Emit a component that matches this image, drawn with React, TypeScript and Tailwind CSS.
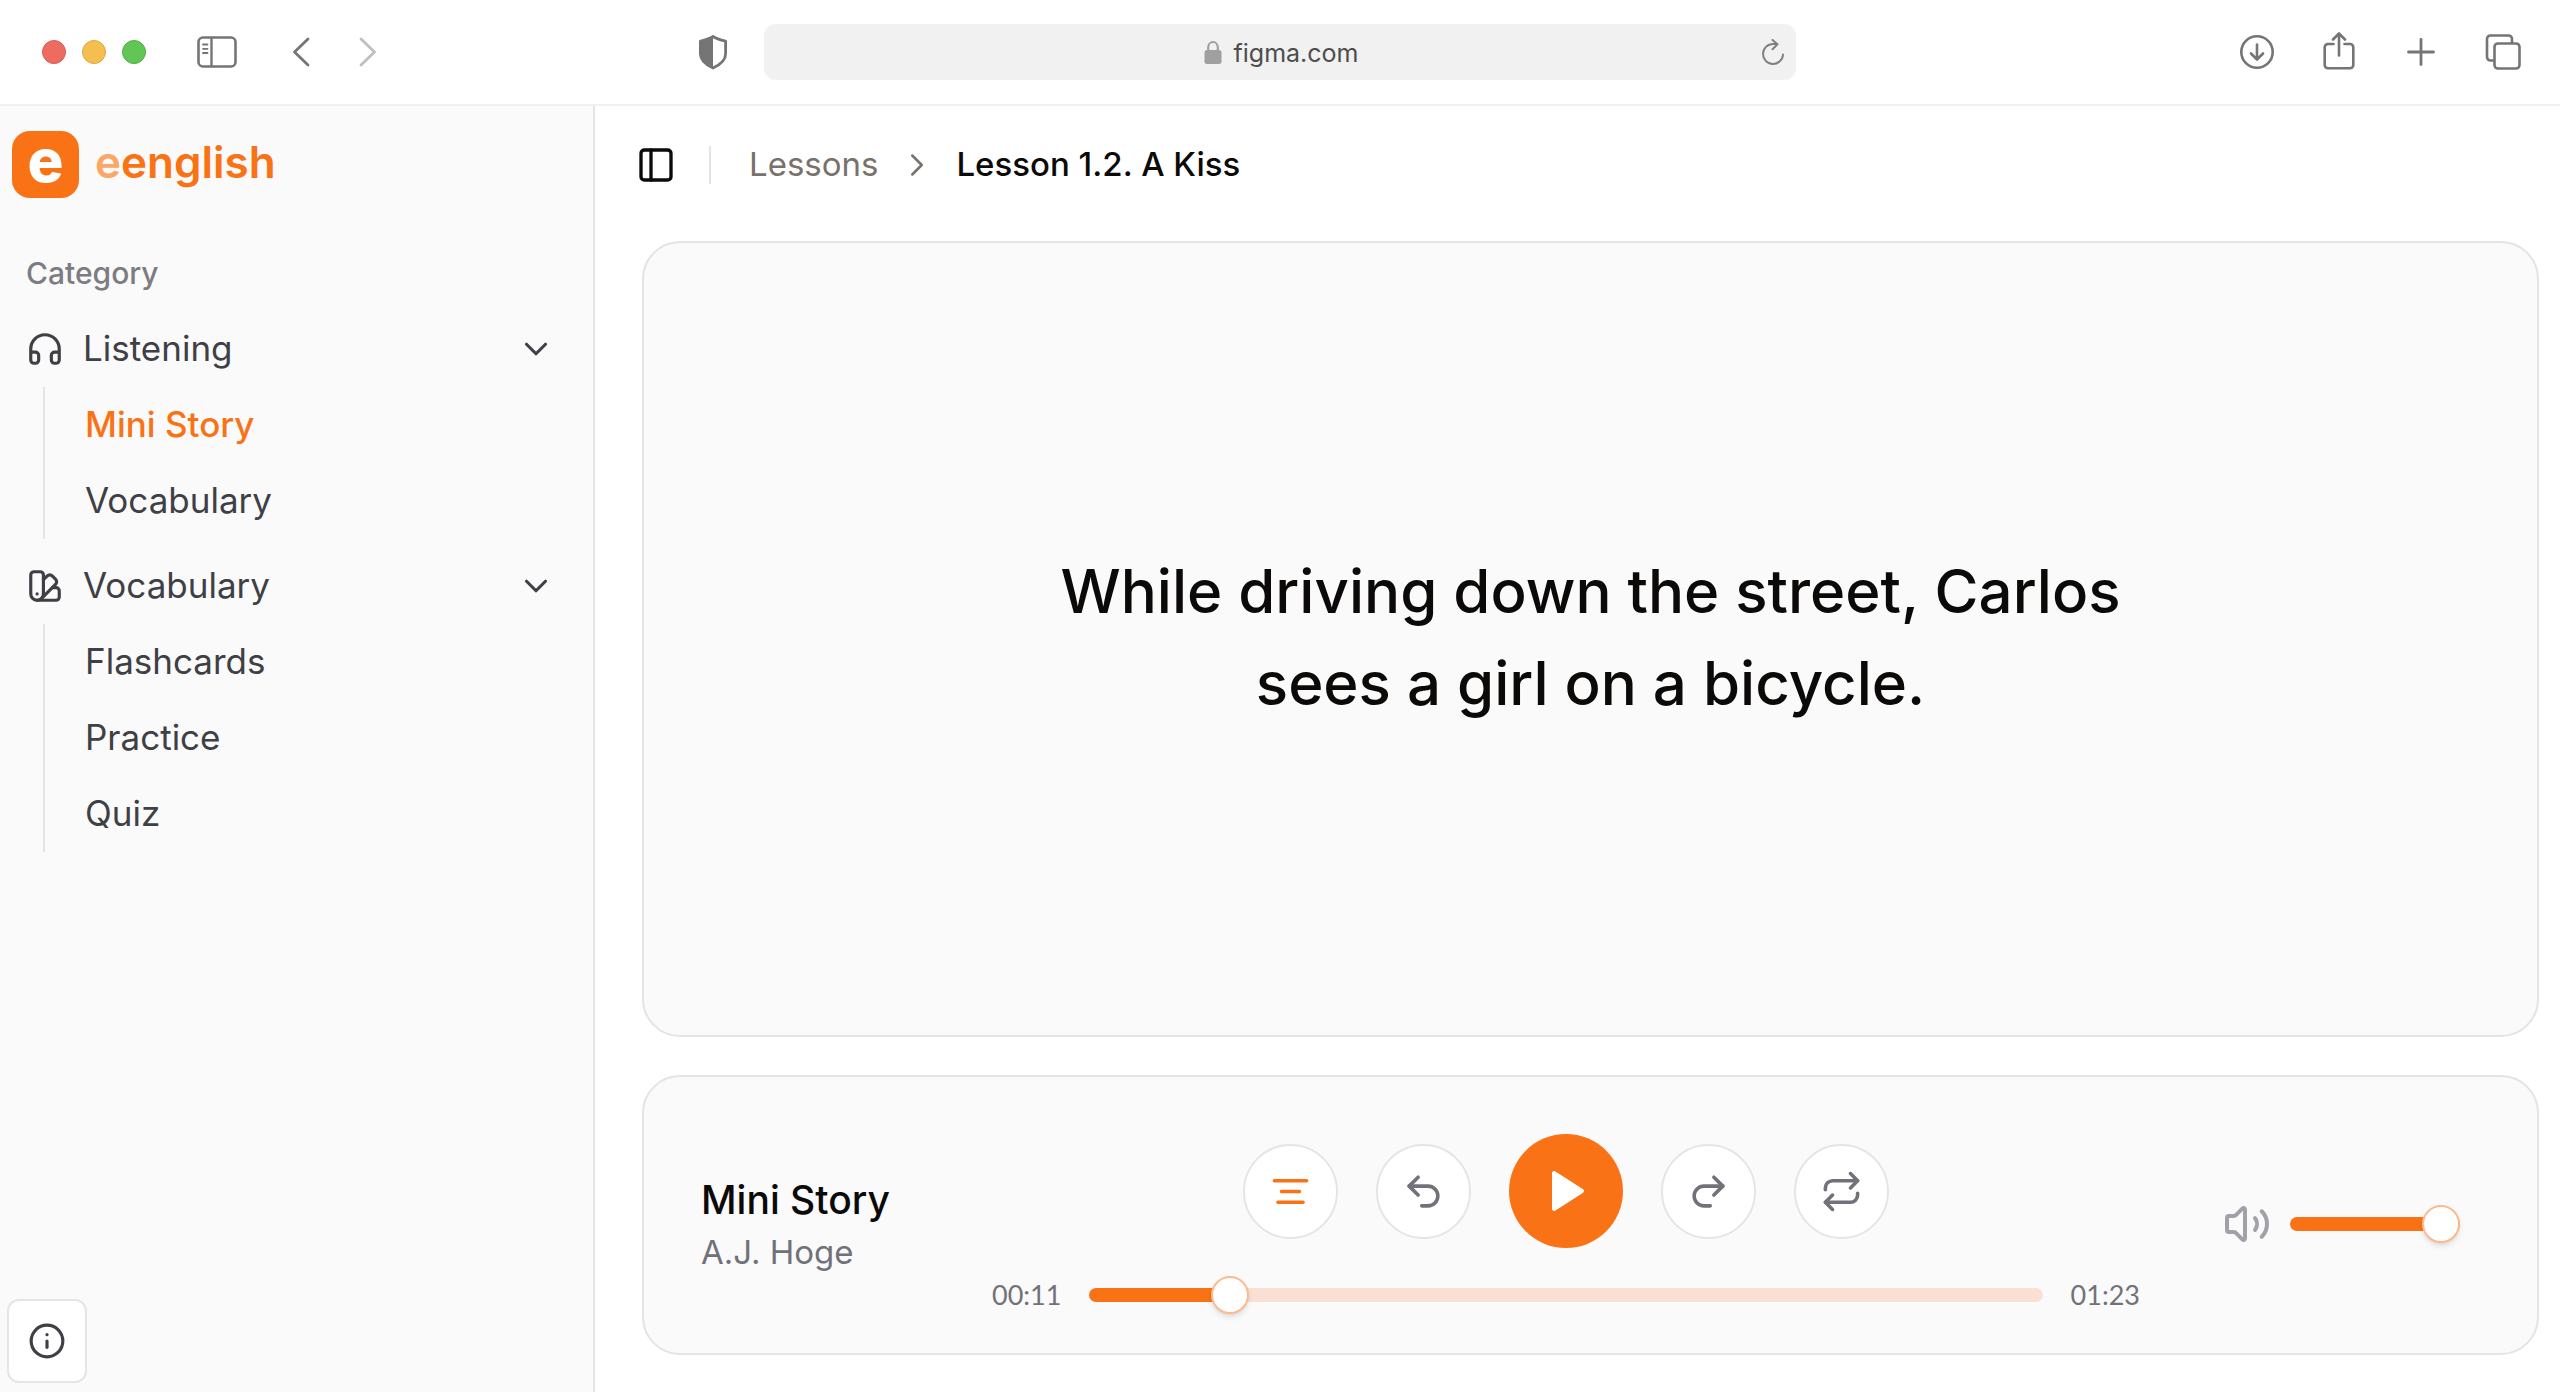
import { useState } from "react";
import {
  ChevronDown,
  ChevronRight,
  Headphones,
  Info,
  PanelLeft,
  Redo2,
  Repeat,
  SwatchBook,
  Undo2,
  Volume2,
  type LucideIcon,
} from "lucide-react";

const TRACK_EMPTY = "#fae0d2";
const TRACK_FILL = "#f97316";

function BrowserBar() {
  return (
    <header className="grid h-[106px] shrink-0 grid-cols-[764fr_1032fr_764fr] items-center border-b-2 border-[#f0f0f0] bg-white text-[#757575]">
      <div className="flex items-center pl-[42px] pr-9">
        <div className="flex gap-4">
          <span className="size-6 rounded-full border border-[#d95b50] bg-[#ed6b60]" />
          <span className="size-6 rounded-full border border-[#dba744] bg-[#f5bf4f]" />
          <span className="size-6 rounded-full border border-[#52ab45] bg-[#62c655]" />
        </div>
        <button type="button" aria-label="Show sidebar" className="ml-[50px]">
          <svg width="42" height="34" viewBox="0 0 42 34" fill="none" stroke="currentColor" strokeWidth="2.6">
            <rect x="2.5" y="2.5" width="37" height="29" rx="4.5" />
            <path d="M15.500 2.500v29" strokeWidth="2.400" />
            <path d="M7 9.500h4.500M7 13.800h4.500M7 18h4.500" strokeWidth="1.800" strokeLinecap="round" />
          </svg>
        </button>
        <button type="button" aria-label="Back" className="ml-[52px]">
          <svg width="20" height="32" viewBox="0 0 20 32" fill="none" stroke="currentColor" strokeWidth="2.800" strokeLinecap="round" strokeLinejoin="round">
            <path d="M18 3 4.500 16 18 29" />
          </svg>
        </button>
        <button type="button" aria-label="Forward" className="ml-[47px] text-[#bfbfbf]">
          <svg width="20" height="32" viewBox="0 0 20 32" fill="none" stroke="currentColor" strokeWidth="2.800" strokeLinecap="round" strokeLinejoin="round">
            <path d="M4 3l13.500 13L4 29" />
          </svg>
        </button>
        <button type="button" aria-label="Privacy report" className="ml-auto">
          <svg width="30" height="36" viewBox="0 0 30 36" fill="none" stroke="currentColor" strokeWidth="2.8" strokeLinejoin="round">
            <path d="M15 2.5 C11.5 5 7.500 6 2.400 7.200 V20 C2.400 26 8.500 31 15 34 C21.500 31 27.600 26 27.600 20 V7.200 C22.500 6 18.500 5 15 2.500Z" />
            <path d="M15 2.500 C11.500 5 7.500 6 2.400 7.200 V20 C2.400 26 8.500 31 15 34Z" fill="currentColor" stroke="none" />
          </svg>
        </button>
      </div>

      <div className="flex h-14 items-center rounded-xl bg-[#f1f1f1] pt-0.5">
        <span className="w-12" />
        <div className="flex flex-1 items-center justify-center gap-3">
          <svg width="18" height="26" viewBox="0 0 18 26" fill="none">
            <path d="M4.200 12V7.500a4.800 5.500 0 0 1 9.600 0V12" stroke="#a0a0a0" strokeWidth="2.200" />
            <rect x="0.500" y="10" width="17" height="14" rx="2.500" fill="#a0a0a0" />
          </svg>
          <span className="text-[25px] leading-8 text-[#4d4d4d]">figma.com</span>
        </div>
        <button type="button" aria-label="Reload" className="flex w-[46px] justify-center text-[#808080]">
          <svg width="26" height="28" viewBox="0 0 26 28" fill="none" stroke="currentColor" strokeWidth="2" strokeLinecap="round" strokeLinejoin="round">
            <path d="M23 15.500a10 10 0 1 1-10-10.500h3.500" />
            <path d="M12.500 1l5 4.200-5 5" />
          </svg>
        </button>
      </div>

      <div className="flex items-center justify-end pr-[38px]">
        <button type="button" aria-label="Downloads">
          <svg width="38" height="40" viewBox="0 0 38 40" fill="none" stroke="currentColor" strokeWidth="2.600" strokeLinecap="round" strokeLinejoin="round">
            <circle cx="19" cy="20" r="15.700" />
            <path d="M19 12.500v14.500M13 21.500l6 6 6-6" />
          </svg>
        </button>
        <button type="button" aria-label="Share" className="ml-[44px]">
          <svg width="38" height="40" viewBox="0 0 38 40" fill="none" stroke="currentColor" strokeWidth="2.600" strokeLinecap="round" strokeLinejoin="round">
            <path d="M13.500 12H8a3.300 3.300 0 0 0-3.300 3.300V33A3.300 3.300 0 0 0 8 36.300h22a3.300 3.300 0 0 0 3.300-3.300V15.300A3.300 3.300 0 0 0 30 12h-5.500" />
            <path d="M19 23.500V1.800M13 7.500l6-6 6 6" />
          </svg>
        </button>
        <button type="button" aria-label="New tab" className="ml-[44px]">
          <svg width="38" height="40" viewBox="0 0 38 40" fill="none" stroke="currentColor" strokeWidth="2.800" strokeLinecap="round">
            <path d="M19 7.500v25M6.500 20h25" />
          </svg>
        </button>
        <button type="button" aria-label="Tab overview" className="ml-[44px]">
          <svg width="38" height="40" viewBox="0 0 38 40" fill="none" stroke="currentColor" strokeWidth="2.600" strokeLinejoin="round">
            <rect x="10.500" y="11.500" width="25" height="25" rx="3.500" />
            <path d="M10.500 28.500H6.500A3.500 3.500 0 0 1 3 25V7A3.500 3.500 0 0 1 6.500 3.500h18A3.500 3.500 0 0 1 28 7v4.500" />
          </svg>
        </button>
      </div>
    </header>
  );
}

type Group = { label: string; icon: LucideIcon; items: string[] };

const groups: Group[] = [
  { label: "Listening", icon: Headphones, items: ["Mini Story", "Vocabulary"] },
  { label: "Vocabulary", icon: SwatchBook, items: ["Flashcards", "Practice", "Quiz"] },
];

function NavGroup({ group }: { group: Group }) {
  const [open, setOpen] = useState(true);
  const Icon = group.icon;
  return (
    <section>
      <button
        type="button"
        aria-expanded={open}
        onClick={() => setOpen(!open)}
        className="flex h-[76px] w-full items-center pl-[26px] pr-[38px] text-left"
      >
        <Icon size={38} />
        <span className="ml-[19px] flex-1 pb-0.5">{group.label}</span>
        <ChevronDown size={38} />
      </button>
      {open && (
        <ul className="ml-[43px] border-l-2 border-[#e4e4e7]">
          {group.items.map((item) => (
            <li key={item}>
              <a
                href="#"
                className={
                  item === "Mini Story"
                    ? "flex h-[76px] items-center pb-0.5 pl-10 font-medium text-[#f97316]"
                    : "flex h-[76px] items-center pb-0.5 pl-10"
                }
              >
                {item}
              </a>
            </li>
          ))}
        </ul>
      )}
    </section>
  );
}

function Sidebar() {
  return (
    <aside className="flex w-[595px] shrink-0 flex-col border-r-2 border-[#e4e4e7] bg-[#fafafa] pb-[9px] pt-[25px]">
      <a href="#" className="flex h-[67px] items-center gap-4 pl-3">
        <span className="flex size-[67px] items-center justify-center rounded-[18px] bg-[#f97316] pb-2.5 text-[60px] font-extrabold leading-none text-white">
          e
        </span>
        <span className="pb-1.5 text-[44px] font-semibold leading-[52px] text-[#f97316]">
          <span className="text-[#fda766]">e</span>english
        </span>
      </a>
      <h2 className="mt-[38px] flex h-[75px] items-center pl-[26px] text-[30px] font-medium text-[#7c7c82]">
        Category
      </h2>
      <nav className="flex flex-col gap-[9px] text-[35px] text-[#3f3f46]">
        {groups.map((g) => (
          <NavGroup key={g.label} group={g} />
        ))}
      </nav>
      <button
        type="button"
        aria-label="Information"
        className="ml-[7px] mt-auto flex h-[84px] w-20 items-center justify-center rounded-xl border-2 border-[#e7e5e4] bg-white text-[#3f3f46]"
      >
        <Info size={38} />
      </button>
    </aside>
  );
}

const sliderClass =
  "block h-[14px] cursor-pointer appearance-none rounded-full [&::-webkit-slider-thumb]:size-[38px] [&::-webkit-slider-thumb]:appearance-none [&::-webkit-slider-thumb]:rounded-full [&::-webkit-slider-thumb]:border-2 [&::-webkit-slider-thumb]:border-[#fdba8c] [&::-webkit-slider-thumb]:bg-white [&::-webkit-slider-thumb]:shadow-md";

function trackStyle(value: number, max: number) {
  const pct = (value / max) * 100;
  return { background: `linear-gradient(to right, ${TRACK_FILL} ${pct}%, ${TRACK_EMPTY} ${pct}%)` };
}

function formatTime(seconds: number) {
  const m = String(Math.floor(seconds / 60)).padStart(2, "0");
  const s = String(seconds % 60).padStart(2, "0");
  return `${m}:${s}`;
}

const roundButton =
  "flex size-[95px] items-center justify-center rounded-full border-2 border-[#e7e5e4] bg-white text-[#71717a]";

function Player() {
  const duration = 83;
  const [time, setTime] = useState(11);
  const [volume, setVolume] = useState(100);
  return (
    <section className="flex items-center rounded-[38px] border-2 border-[#e4e4e7] bg-[#fafafa] pb-[39px] pl-[57px] pr-[77px] pt-[57px]">
      <div className="w-[291px] shrink-0 pt-1">
        <h2 className="text-[39px] font-medium leading-[52px] text-[#0c0a09]">Mini Story</h2>
        <p className="text-[33px] leading-[52px] text-[#71717a]">A.J. Hoge</p>
      </div>

      <div className="flex flex-1 flex-col gap-7">
        <div className="flex items-center justify-center gap-[38px]">
          <button type="button" aria-label="Transcript" className={roundButton}>
            <svg width="43" height="43" viewBox="0 0 24 24" fill="none" stroke="#f97316" strokeWidth="2" strokeLinecap="round">
              <path d="M21 6H3M17 12H7M19 18H5" />
            </svg>
          </button>
          <button type="button" aria-label="Back a sentence" className={roundButton}>
            <Undo2 size={43} />
          </button>
          <button
            type="button"
            aria-label="Play"
            className="flex size-[114px] items-center justify-center rounded-full bg-[#f97316] text-white"
          >
            <svg width="48" height="48" viewBox="0 0 24 24" fill="currentColor" stroke="currentColor" strokeWidth="2" strokeLinejoin="round">
              <path d="M6 3l14 9-14 9z" />
            </svg>
          </button>
          <button type="button" aria-label="Forward a sentence" className={roundButton}>
            <Redo2 size={43} />
          </button>
          <button type="button" aria-label="Repeat" className={roundButton}>
            <Repeat size={43} />
          </button>
        </div>
        <div className="flex h-[38px] items-center gap-7 font-['Lato',sans-serif] text-[27px] leading-[38px] text-[#71717a]">
          <span>{formatTime(time)}</span>
          <input
            type="range"
            aria-label="Position"
            min={0}
            max={duration}
            value={time}
            onChange={(e) => setTime(Number(e.target.value))}
            className={`${sliderClass} min-w-0 flex-1`}
            style={trackStyle(time, duration)}
          />
          <span>{formatTime(duration)}</span>
        </div>
      </div>

      <div className="ml-[83px] flex items-center gap-[19px] text-[#a1a1aa]">
        <Volume2 size={48} />
        <input
          type="range"
          aria-label="Volume"
          min={0}
          max={100}
          value={volume}
          onChange={(e) => setVolume(Number(e.target.value))}
          className={`${sliderClass} w-[170px]`}
          style={trackStyle(volume, 100)}
        />
      </div>
    </section>
  );
}

export default function App() {
  return (
    <div className="flex min-h-screen flex-col bg-white font-['Inter',sans-serif]">
      <BrowserBar />
      <div className="flex flex-1">
        <Sidebar />
        <main className="flex min-w-0 flex-1 flex-col pb-[37px] pl-[47px] pr-[21px]">
          <nav aria-label="Breadcrumb" className="flex h-[135px] items-center pb-[18px] text-[33px] leading-[44px]">
            <button type="button" aria-label="Toggle sidebar" className="-ml-1.5 text-[#0c0a09]">
              <PanelLeft size={40} />
            </button>
            <span className="ml-[33px] h-[38px] w-0.5 bg-[#e4e4e7]" />
            <a href="#" className="ml-[38px] pb-0.5 text-[#78716c]">
              Lessons
            </a>
            <ChevronRight size={38} strokeWidth={1.6} className="mx-5 text-[#78716c]" />
            <span aria-current="page" className="pb-0.5 font-medium text-[#0c0a09]">
              Lesson 1.2. A Kiss
            </span>
          </nav>
          <section className="mb-[38px] flex flex-1 items-center justify-center rounded-[38px] border-2 border-[#e4e4e7] bg-[#fafafa]">
            <p className="pb-1 text-center text-[60px] font-medium leading-[92px] text-[#0c0a09]">
              While driving down the street, Carlos
              <br />
              sees a girl on a bicycle.
            </p>
          </section>
          <Player />
        </main>
      </div>
    </div>
  );
}
